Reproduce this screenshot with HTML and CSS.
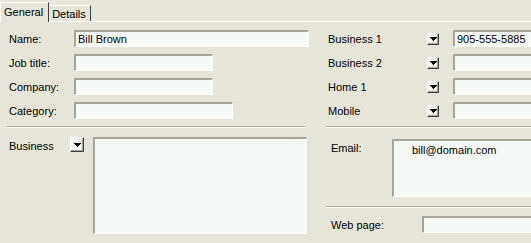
FILE: index.html
```html
<!DOCTYPE html>
<html>
<head>
  <meta charset="utf-8" />
  <title>Contact</title>
  <link rel="stylesheet" href="styles.css">
</head>
<body>
  <div class="tabs">
    <div class="tab active">General</div>
    <div class="tab">Details</div>
  </div>
  <div class="panel">
    <div class="col left">
      <div class="row">
        <span class="label">Name:</span>
        <input class="field w-name" type="text" value="Bill Brown">
      </div>
      <div class="row">
        <span class="label">Job title:</span>
        <input class="field w-short" type="text">
      </div>
      <div class="row">
        <span class="label">Company:</span>
        <input class="field w-short" type="text">
      </div>
      <div class="row row-last">
        <span class="label">Category:</span>
        <input class="field w-cat" type="text">
      </div>
      <div class="sep"></div>
      <div class="addr">
        <span class="label addr-label">Business</span>
        <span class="drop drop-big"><svg width="7" height="4" viewBox="0 0 7 4"><polygon points="0,0 7,0 3.5,4" fill="#000"/></svg></span>
        <div class="field addr-box"></div>
      </div>
    </div>
    <div class="col right">
      <div class="row">
        <span class="label phone-label">Business 1</span>
        <span class="drop"><svg width="7" height="4" viewBox="0 0 7 4"><polygon points="0,0 7,0 3.5,4" fill="#000"/></svg></span>
        <input class="field w-phone" type="text" value="905-555-5885">
      </div>
      <div class="row">
        <span class="label phone-label">Business 2</span>
        <span class="drop"><svg width="7" height="4" viewBox="0 0 7 4"><polygon points="0,0 7,0 3.5,4" fill="#000"/></svg></span>
        <input class="field w-phone" type="text">
      </div>
      <div class="row">
        <span class="label phone-label">Home 1</span>
        <span class="drop"><svg width="7" height="4" viewBox="0 0 7 4"><polygon points="0,0 7,0 3.5,4" fill="#000"/></svg></span>
        <input class="field w-phone" type="text">
      </div>
      <div class="row row-last">
        <span class="label phone-label">Mobile</span>
        <span class="drop"><svg width="7" height="4" viewBox="0 0 7 4"><polygon points="0,0 7,0 3.5,4" fill="#000"/></svg></span>
        <input class="field w-phone" type="text">
      </div>
      <div class="sep"></div>
      <div class="email">
        <span class="label email-label">Email:</span>
        <div class="field email-box">bill@domain.com</div>
      </div>
      <div class="sep sep-web"></div>
      <div class="row web">
        <span class="label web-label">Web page:</span>
        <input class="field w-web" type="text">
      </div>
    </div>
  </div>
</body>
</html>
```

FILE: styles.css
```css
:root {
  --face: #e6e5d8;
  --field-bg: #f5faf6;
  --shadow: #a7a696;
  --light: #ffffff;
  --dark: #404040;
}
body {
  margin: 0;
  width: 531px;
  height: 243px;
  overflow: hidden;
  background-color: var(--face);
  font-family: "Liberation Sans", Arial, sans-serif;
  font-size: 11px;
  color: #000;
}

/* tab strip */
.tabs {
  display: flex;
  align-items: flex-start;
  height: 21px;
  border-bottom: 1px solid var(--light);
}
.tab {
  box-sizing: border-box;
  margin-top: 5px;
  height: 16px;
  padding: 1px 4px 0 3px;
  border-top: 1px solid var(--light);
  border-right: 1px solid var(--dark);
  line-height: 14px;
}
.tab.active {
  margin-top: 2px;
  height: 20px;
  padding: 2px 5px 0 3px;
  border-left: 1px solid var(--light);
  background-color: var(--face);
  position: relative;
}

/* two columns */
.panel {
  display: grid;
  grid-template-columns: 316px 1fr;
  column-gap: 10px;
}
.col {
  padding-top: 8px;
}
.left {
  padding-left: 7px;
}
.row {
  display: flex;
  align-items: center;
  height: 17px;
  margin-bottom: 7px;
}
.row-last {
  margin-top: 2px;
  margin-bottom: 7px;
}
.label {
  box-sizing: border-box;
  flex: none;
  width: 67px;
  padding-left: 2px;
  line-height: 14px;
  white-space: nowrap;
}

.field {
  box-sizing: border-box;
  flex: none;
  height: 17px;
  margin: 0;
  padding: 0 2px;
  background-color: var(--field-bg);
  border-style: solid;
  border-width: 2px 1px 1px 2px;
  border-color: var(--shadow) var(--light) var(--light) var(--shadow);
  font: inherit;
  color: #000;
  outline: none;
}
.w-name { width: 235px; }
.w-short { width: 139px; }
.w-cat { width: 159px; }
.w-phone { width: 100px; }
.w-web { width: 130px; }

.sep {
  width: 298px;
  height: 0;
  border-top: 1px solid var(--shadow);
  border-bottom: 1px solid var(--light);
}
.right .sep {
  width: 220px;
}

/* combo drop buttons */
.drop {
  box-sizing: border-box;
  flex: none;
  display: flex;
  align-items: center;
  justify-content: center;
  width: 12px;
  height: 12px;
  background-color: #f3f2ea;
  border-style: solid;
  border-width: 1px;
  border-color: var(--light) var(--dark) var(--dark) var(--light);
  box-shadow: inset -1px -1px 0 #a0a0a0;
}
.drop svg {
  display: block;
  shape-rendering: crispEdges;
}
.drop-big {
  width: 14px;
  height: 15px;
  margin-right: 9px;
}

/* address block */
.addr {
  display: flex;
  align-items: flex-start;
  margin-top: 9px;
}
.addr-label {
  width: 63px;
  padding-top: 2px;
}
.addr-box {
  width: 214px;
  height: 97px;
}

/* right column */
.phone-label {
  width: 101px;
}
.right .drop:not(.drop-big) {
  margin-right: 14px;
}
.email {
  display: flex;
  align-items: flex-start;
  margin-top: 11px;
}
.email-label {
  width: 66px;
  padding-left: 5px;
  padding-top: 2px;
}
.email-box {
  width: 150px;
  height: 58px;
  padding: 2px 0 0 18px;
  line-height: 14px;
}
.sep-web {
  margin-top: 9px;
}
.web {
  margin-top: 8px;
}
.web-label {
  width: 96px;
  padding-left: 5px;
}
```
